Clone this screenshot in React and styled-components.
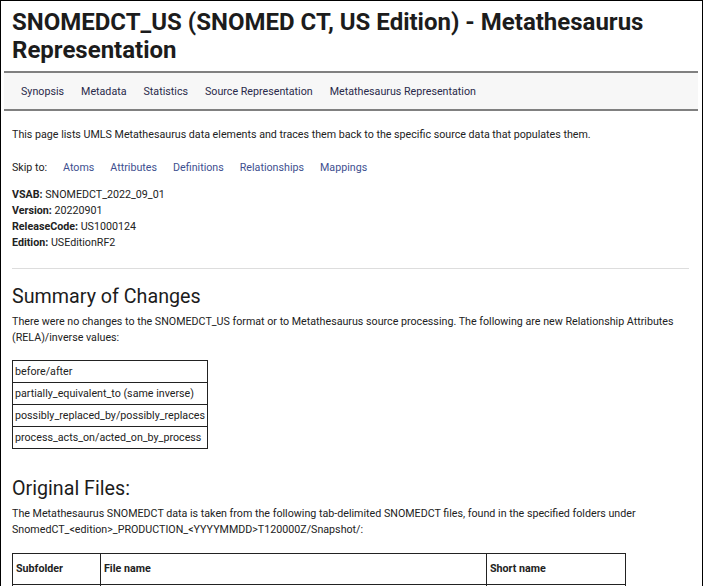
import styled, { createGlobalStyle } from "styled-components";

const GlobalStyle = createGlobalStyle`
  html, body {
    margin: 0;
    padding: 0;
    background: #ffffff;
  }
  body {
    font-family: Roboto, "Liberation Sans", Arial, sans-serif;
    color: #222222;
  }
`;

const Frame = styled.div`
  box-sizing: border-box;
  width: 703px;
  height: 586px;
  overflow: hidden;
  border: 1px solid #000000;
  border-bottom: none;
  padding: 0 4px 0 3px;
`;

const Title = styled.h1`
  margin: 0;
  padding: 7px 8px 7px 8px;
  font-size: 24px;
  line-height: 28px;
  font-weight: 700;
  color: #1c1c1c;
`;

const Nav = styled.nav`
  display: flex;
  gap: 17px;
  align-items: center;
  height: 36px;
  padding: 0 17px;
  background: #f7f7f7;
  border-top: 2px solid #808080;
  border-bottom: 2px solid #808080;
`;

const NavLink = styled.a`
  font-size: 10.7px;
  color: #2a2a4a;
  text-decoration: none;
`;

const Content = styled.main`
  padding: 0 9px 0 8px;
  font-size: 10.7px;
  line-height: 16px;
  color: #222222;
`;

const Para = styled.p`
  margin: ${(p) => p.$top || 0}px 0 0 0;
`;

const SkipRow = styled.div`
  display: flex;
  gap: 16px;
  margin-top: 17px;
`;

const SkipLink = styled.a`
  color: #3e4f8f;
  text-decoration: none;
`;

const Facts = styled.div`
  margin-top: 11px;
`;

const Fact = styled.div`
  b {
    font-weight: 700;
  }
`;

const Rule = styled.hr`
  margin: 17px 0 0 0;
  border: none;
  border-top: 1px solid #dddddd;
`;

const Heading = styled.h2`
  margin: ${(p) => p.$top}px 0 0 0;
  font-size: 19.7px;
  line-height: 24px;
  font-weight: 400;
  color: #1c1c1c;
`;

const Table = styled.table`
  border-collapse: collapse;
  margin-top: ${(p) => p.$top}px;
  font-size: 10.7px;
  line-height: 16px;

  td, th {
    border: 1px solid #222222;
    text-align: left;
    vertical-align: middle;
  }
`;

const SmallCell = styled.td`
  padding: 3px 2px 2px 2px;
`;

const HeadCell = styled.th`
  padding: 7px 3px;
  font-weight: 700;
  width: ${(p) => p.$w}px;
`;

const Cell = styled.td`
  padding: 7px 3px;
`;

const navItems = [
  "Synopsis",
  "Metadata",
  "Statistics",
  "Source Representation",
  "Metathesaurus Representation",
];

const skipItems = ["Atoms", "Attributes", "Definitions", "Relationships", "Mappings"];

const relas = [
  "before/after",
  "partially_equivalent_to (same inverse)",
  "possibly_replaced_by/possibly_replaces",
  "process_acts_on/acted_on_by_process",
];

export default function App() {
  return (
    <>
      <GlobalStyle />
      <Frame>
        <Title>SNOMEDCT_US (SNOMED CT, US Edition) - Metathesaurus Representation</Title>
        <Nav>
          {navItems.map((n) => (
            <NavLink key={n} href="#">
              {n}
            </NavLink>
          ))}
        </Nav>
        <Content>
          <Para $top={16}>
            This page lists UMLS Metathesaurus data elements and traces them back to the
            specific source data that populates them.
          </Para>
          <SkipRow>
            <span>Skip to:</span>
            {skipItems.map((s) => (
              <SkipLink key={s} href="#">
                {s}
              </SkipLink>
            ))}
          </SkipRow>
          <Facts>
            <Fact>
              <b>VSAB:</b> SNOMEDCT_2022_09_01
            </Fact>
            <Fact>
              <b>Version:</b> 20220901
            </Fact>
            <Fact>
              <b>ReleaseCode:</b> US1000124
            </Fact>
            <Fact>
              <b>Edition:</b> USEditionRF2
            </Fact>
          </Facts>
          <Rule />
          <Heading $top={16}>Summary of Changes</Heading>
          <Para $top={5}>
            There were no changes to the SNOMEDCT_US format or to Metathesaurus source
            processing. The following are new Relationship Attributes (RELA)/inverse values:
          </Para>
          <Table $top={14}>
            <tbody>
              {relas.map((r) => (
                <tr key={r}>
                  <SmallCell>{r}</SmallCell>
                </tr>
              ))}
            </tbody>
          </Table>
          <Heading $top={28}>Original Files:</Heading>
          <Para $top={5}>
            The Metathesaurus SNOMEDCT data is taken from the following tab-delimited
            SNOMEDCT files, found in the specified folders under
            SnomedCT_&lt;edition&gt;_PRODUCTION_&lt;YYYYMMDD&gt;T120000Z/Snapshot/:
          </Para>
          <Table $top={15}>
            <thead>
              <tr>
                <HeadCell $w={81}>Subfolder</HeadCell>
                <HeadCell $w={379}>File name</HeadCell>
                <HeadCell $w={132}>Short name</HeadCell>
              </tr>
            </thead>
            <tbody>
              <tr>
                <Cell>Terminology</Cell>
                <Cell>sct2_Concept_Snapshot_&lt;ReleaseCode&gt;_&lt;YYYYMMDD&gt;.txt</Cell>
                <Cell>Concept</Cell>
              </tr>
            </tbody>
          </Table>
        </Content>
      </Frame>
    </>
  );
}
